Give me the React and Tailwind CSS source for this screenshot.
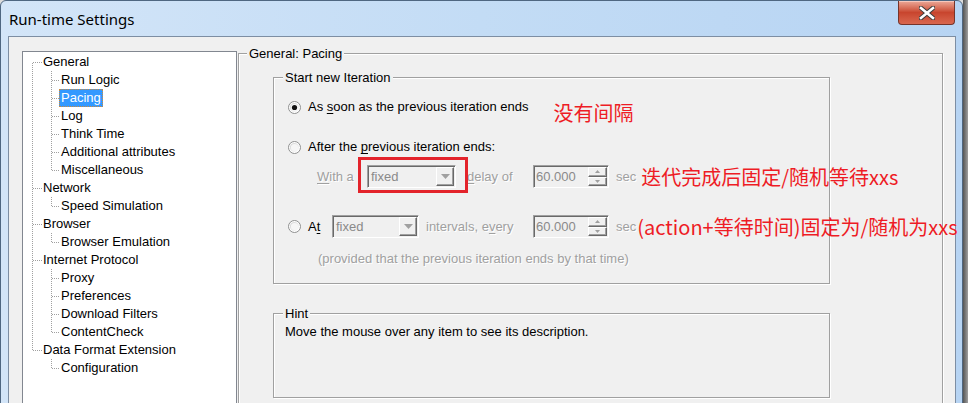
import React from "react";

const DOT = "#a0a0a0";

const tree = [
  { t: "General", c: ["Run Logic", "Pacing", "Log", "Think Time", "Additional attributes", "Miscellaneous"] },
  { t: "Network", c: ["Speed Simulation"] },
  { t: "Browser", c: ["Browser Emulation"] },
  { t: "Internet Protocol", c: ["Proxy", "Preferences", "Download Filters", "ContentCheck"] },
  { t: "Data Format Extension", c: ["Configuration"] },
];

function RootRow({ label, first, last }) {
  return (
    <div className="flex h-[18px] items-center">
      <svg width="20" height="18" className="shrink-0" shapeRendering="crispEdges">
        <line x1="9.5" y1={first ? 10 : 0} x2="9.5" y2={last ? 10 : 18} stroke={DOT} strokeDasharray="1 1" />
        <line x1="10" y1="9.5" x2="19" y2="9.5" stroke={DOT} strokeDasharray="1 1" />
      </svg>
      <span className="leading-[18px]">{label}</span>
    </div>
  );
}

function ChildRow({ label, lastChild, parentLast, selected }) {
  return (
    <div className="flex h-[18px] items-center">
      <svg width="38" height="18" className="shrink-0" shapeRendering="crispEdges">
        {!parentLast && <line x1="9.5" y1="0" x2="9.5" y2="18" stroke={DOT} strokeDasharray="1 1" />}
        <line x1="28.5" y1="0" x2="28.5" y2={lastChild ? 10 : 18} stroke={DOT} strokeDasharray="1 1" />
        <line x1="29" y1="9.5" x2="37" y2="9.5" stroke={DOT} strokeDasharray="1 1" />
      </svg>
      {selected ? (
        <span className="-ml-[2px] h-[18px] bg-[#3399ff] px-[2px] leading-[18px] text-white outline outline-1 -outline-offset-1 outline-dotted outline-[#d08a3a]">
          {label}
        </span>
      ) : (
        <span className="leading-[18px]">{label}</span>
      )}
    </div>
  );
}

function Radio({ checked }) {
  return (
    <svg width="13" height="13" viewBox="0 0 13 13" className="shrink-0">
      <defs>
        <linearGradient id={checked ? "rg1" : "rg2"} x1="0" y1="0" x2="1" y2="1">
          <stop offset="0" stopColor="#cfcfcf" />
          <stop offset="1" stopColor="#ffffff" />
        </linearGradient>
      </defs>
      <circle cx="6.5" cy="6.5" r="6" fill="#ffffff" stroke="#8e8f8f" />
      <circle cx="6.5" cy="6.5" r="4.6" fill={`url(#${checked ? "rg1" : "rg2"})`} />
      <circle cx="6.5" cy="6.5" r="3.6" fill="#f6f6f6" />
      {checked && <circle cx="6.5" cy="6.5" r="2.6" fill="#111111" />}
    </svg>
  );
}

function Combo({ w }) {
  return (
    <div className={`${w} flex h-[23px] shrink-0 border border-b-white border-l-[#a0a0a0] border-r-white border-t-[#a0a0a0] bg-[#f0f0f0] shadow-[inset_1px_1px_0_#696969]`}>
      <span className="flex-1 pl-[3px] leading-[21px] text-[#8a8a8a]">fixed</span>
      <div className="my-[1px] mr-[1px] flex w-[18px] items-center justify-center border border-b-[#696969] border-l-white border-r-[#696969] border-t-white bg-[#f0f0f0] shadow-[inset_-1px_-1px_0_#a0a0a0]">
        <svg width="9" height="5" viewBox="0 0 9 5">
          <path d="M0 0H9L4.5 5Z" fill="#a0a0a0" />
        </svg>
      </div>
    </div>
  );
}

function SpinBtn({ up }) {
  return (
    <div className="flex flex-1 items-center justify-center border border-b-[#696969] border-l-white border-r-[#696969] border-t-white bg-[#f0f0f0] shadow-[inset_-1px_-1px_0_#a0a0a0]">
      <svg width="5" height="3" viewBox="0 0 5 3">
        <path d={up ? "M0 3H5L2.5 0Z" : "M0 0H5L2.5 3Z"} fill="#a0a0a0" />
      </svg>
    </div>
  );
}

function Spin() {
  return (
    <div className="flex h-[23px] w-[76px] shrink-0 border border-b-white border-l-[#a0a0a0] border-r-white border-t-[#a0a0a0] bg-[#f0f0f0] shadow-[inset_1px_1px_0_#696969]">
      <span className="flex-1 pl-[2px] pt-[1px] leading-[19px] text-[#8a8a8a]">60.000</span>
      <div className="my-[1px] mr-[1px] flex w-[19px] flex-col">
        <SpinBtn up />
        <SpinBtn />
      </div>
    </div>
  );
}

const dis = "text-[#a0a0a0] [text-shadow:1px_1px_0_#ffffff]";
const red = "font-['Noto_Sans_CJK_SC','Noto_Sans',sans-serif] text-[20px] leading-[24px] text-[#ee1c25]";
const box = "border border-[#a0a0a0] shadow-[inset_1px_1px_0_#ffffff,1px_1px_0_#ffffff]";

export default function App() {
  return (
    <div className="flex h-[403px] w-[968px] overflow-hidden bg-[#dcdcdc] font-['Liberation_Sans',Arial,sans-serif] text-[13px] text-black">
      {/* window */}
      <div className="flex h-[430px] w-[963px] shrink-0 flex-col rounded-t-[6px] border border-[#4f6781] bg-gradient-to-r from-[#d3e5f8] via-[#c3dcf5] to-[#b7d4f3]">
        {/* title bar */}
        <div className="flex h-[35px] shrink-0 items-start justify-between">
          <div className="ml-[8px] mt-[8px] font-['Segoe_UI','Noto_Sans',sans-serif] text-[15px] leading-[21px] text-black">
            Run-time Settings
          </div>
          <div className="mr-[7px] flex h-[24px] w-[57px] items-center justify-center rounded-b-[4px] border border-t-0 border-[#76342a] bg-gradient-to-b from-[#eaa898] via-[#c8452e] to-[#d9674f] shadow-[inset_0_1px_0_#f6c7bc]">
            <svg width="16" height="14" viewBox="0 0 16 14">
              <path d="M2 2L14 12M14 2L2 12" stroke="#3b3b3b" strokeWidth="4.6" strokeLinecap="square" />
              <path d="M2 2L14 12M14 2L2 12" stroke="#ffffff" strokeWidth="2.6" strokeLinecap="square" />
            </svg>
          </div>
        </div>

        {/* client area */}
        <div className="ml-[7px] flex h-[380px] w-[948px] items-start border-l border-r border-t border-[#7d8ea3] bg-[#f0f0f0] pl-[13px]">
          {/* tree */}
          <div className="mt-[14px] h-[370px] w-[215px] shrink-0 border border-[#828790] bg-white pt-[1px]">
            {tree.map((g, gi) => (
              <React.Fragment key={g.t}>
                <RootRow label={g.t} first={gi === 0} last={gi === tree.length - 1} />
                {g.c.map((c, ci) => (
                  <ChildRow
                    key={c}
                    label={c}
                    lastChild={ci === g.c.length - 1}
                    parentLast={gi === tree.length - 1}
                    selected={c === "Pacing"}
                  />
                ))}
              </React.Fragment>
            ))}
          </div>

          {/* General: Pacing */}
          <fieldset className={`ml-[1px] mt-[9px] h-[400px] w-[705px] min-w-0 shrink-0 pl-[8px] ${box}`}>
            <legend className="bg-[#f0f0f0] px-[2px] leading-[15px]">General: Pacing</legend>

            <fieldset className={`ml-[26px] mt-[9px] w-[557px] min-w-0 pb-[17px] pl-[9px] ${box}`}>
              <legend className="bg-[#f0f0f0] px-[2px] leading-[15px]">Start new Iteration</legend>

              <div className="mt-[12px] flex h-[20px] items-center whitespace-nowrap">
                <div className="ml-[5px]"><Radio checked /></div>
                <span className="ml-[7px]">
                  As <span className="underline underline-offset-2">s</span>oon as the previous iteration ends
                </span>
                <span className={`ml-[25px] translate-y-[6px] ${red}`}>没有间隔</span>
              </div>

              <div className="mt-[20px] flex h-[20px] items-center whitespace-nowrap">
                <div className="ml-[5px]"><Radio /></div>
                <span className="ml-[7px]">
                  After the <span className="underline underline-offset-2">p</span>revious iteration ends:
                </span>
              </div>

              <div className="mt-[8px] flex h-[23px] items-center whitespace-nowrap">
                <span className={`ml-[34px] w-[50px] shrink-0 ${dis}`}>
                  <span className="underline underline-offset-2">W</span>ith a
                </span>
                <div className="relative shrink-0">
                  <Combo w="w-[89px]" />
                  <div className="absolute -bottom-[5px] -left-[9px] -right-[12px] -top-[8px] border-[3px] border-[#e3232b]" />
                </div>
                <span className={`ml-[11px] w-[66px] shrink-0 ${dis}`}>
                  <span className="underline underline-offset-2">d</span>elay of
                </span>
                <Spin />
                <span className={`ml-[7px] ${dis}`}>sec</span>
                <span className={`ml-[5px] ${red}`}>迭代完成后固定/随机等待xxs</span>
              </div>

              <div className="mt-[27px] flex h-[23px] items-center whitespace-nowrap">
                <div className="ml-[5px]"><Radio /></div>
                <span className="ml-[7px] w-[24px] shrink-0">
                  A<span className="underline underline-offset-2">t</span>
                </span>
                <Combo w="w-[87px]" />
                <span className={`ml-[7px] w-[107px] shrink-0 ${dis}`}>
                  intervals, e<span className="underline underline-offset-2">v</span>ery
                </span>
                <Spin />
                <span className={`ml-[7px] ${dis}`}>sec</span>
                <span className={`ml-[1px] ${red}`}>(action+等待时间)固定为/随机为xxs</span>
              </div>

              <div className={`ml-[35px] mt-[13px] h-[15px] whitespace-nowrap leading-[15px] ${dis}`}>
                (provided that the previous iteration ends by that time)
              </div>
            </fieldset>

            <fieldset className={`ml-[26px] mt-[22px] h-[92px] w-[557px] min-w-0 pl-[9px] ${box}`}>
              <legend className="bg-[#f0f0f0] px-[2px] leading-[15px]">Hint</legend>
              <div className="pl-[2px] pt-[3px] leading-[15px]">Move the mouse over any item to see its description.</div>
            </fieldset>
          </fieldset>
        </div>
      </div>
      <div className="h-full flex-1 bg-gradient-to-r from-[#555555] to-[#a0a0a0]" />
    </div>
  );
}
